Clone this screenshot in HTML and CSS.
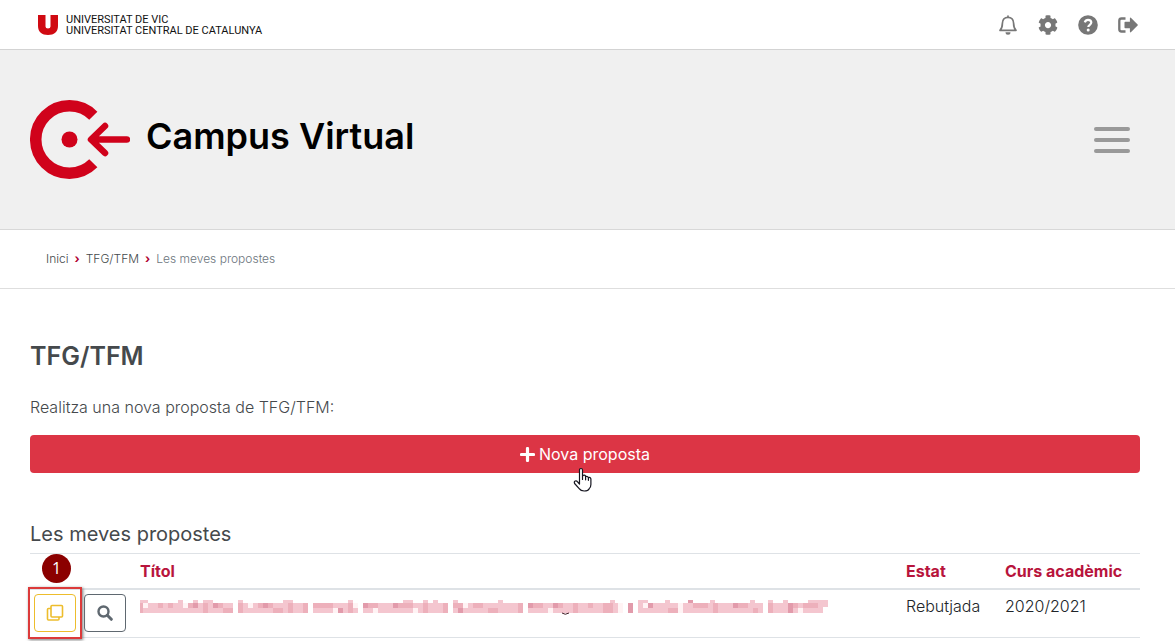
FILE: index.html
```html
<!DOCTYPE html>
<html lang="ca">
<head>
<meta charset="utf-8">
<meta name="viewport" content="width=device-width, initial-scale=1">
<title>Campus Virtual - Les meves propostes</title>
<link rel="stylesheet" href="styles.css">
</head>
<body>
<header class="topbar">
  <a class="university" href="#">
    <svg width="20" height="20" viewBox="0 0 20 20" aria-hidden="true"><path fill="#d00a12" d="M0 0h7.500v11.500q0 2 2.500 2t2.500-2V0H20v11c0 6-4 9-10 9S0 17 0 11z"/></svg>
    <span class="university-name">UNIVERSITAT DE VIC<br>UNIVERSITAT CENTRAL DE CATALUNYA</span>
  </a>
  <nav class="tools" aria-label="Eines">
    <button class="tool" type="button" aria-label="Notificacions"><svg width="20" height="20" viewBox="0 0 20 20"><path d="M10 2.200v-1.200M2 15.300h16c-2-2-2.400-3-2.400-7 0-3.600-2.300-6-5.600-6s-5.600 2.400-5.600 6c0 4-.4 5-2.400 7z" fill="none" stroke="#777" stroke-width="1.700" stroke-linejoin="round" stroke-linecap="round"/><path d="M7.500 17.300h5a2.500 2.500 0 0 1-5 0z" fill="#777"/></svg></button>
    <button class="tool" type="button" aria-label="Configuració"><svg width="20" height="20" viewBox="0 0 512 512"><path fill="#777" d="M487.400 315.700l-42.600-24.600c4.300-23.200 4.300-47 0-70.200l42.600-24.600c4.900-2.800 7.100-8.600 5.500-14-11.100-35.600-30-67.800-54.700-94.600-3.800-4.100-10-5.100-14.800-2.300L380.800 110c-17.900-15.400-38.500-27.300-60.800-35.100V25.800c0-5.600-3.900-10.500-9.400-11.700-36.700-8.200-74.300-7.800-109.200 0-5.500 1.200-9.400 6.100-9.400 11.700V75c-22.200 7.900-42.800 19.800-60.800 35.100L88.700 85.500c-4.900-2.800-11-1.900-14.800 2.300-24.700 26.700-43.600 58.900-54.700 94.600-1.700 5.400.6 11.200 5.500 14L67.300 221c-4.300 23.200-4.300 47 0 70.200l-42.600 24.600c-4.900 2.800-7.100 8.600-5.500 14 11.100 35.600 30 67.800 54.700 94.600 3.800 4.100 10 5.100 14.800 2.300l42.600-24.600c17.900 15.400 38.500 27.300 60.800 35.100v49.200c0 5.600 3.900 10.500 9.400 11.700 36.700 8.200 74.300 7.800 109.200 0 5.500-1.200 9.400-6.100 9.400-11.700v-49.200c22.200-7.900 42.800-19.800 60.800-35.100l42.600 24.600c4.900 2.800 11 1.900 14.800-2.300 24.700-26.700 43.600-58.900 54.700-94.600 1.500-5.500-.7-11.300-5.600-14.100zM256 336c-44.100 0-80-35.900-80-80s35.900-80 80-80 80 35.900 80 80-35.900 80-80 80z"/></svg></button>
    <button class="tool" type="button" aria-label="Ajuda"><svg width="20" height="20" viewBox="0 0 20 20"><circle cx="10" cy="10" r="9.800" fill="#777"/><path d="M6.800 7.300C7.400 5.600 8.500 4.900 10 4.900c1.900 0 3.300 1.100 3.300 2.700 0 2.200-3 2.300-3 4.500" fill="none" stroke="#fff" stroke-width="2.200"/><circle cx="10.200" cy="14.900" r="1.500" fill="#fff"/></svg></button>
    <button class="tool" type="button" aria-label="Surt"><svg width="20" height="20" viewBox="0 0 20 20"><path d="M7.500 3.500h-4q-2.200 0-2.200 2.200v8.600q0 2.200 2.200 2.200h4" fill="none" stroke="#777" stroke-width="2.300"/><path fill="#777" d="M6.500 7.500q0-.8.800-.8h4.600V3.500q0-1.400 1.200-.6l6.500 6.500q.6.600 0 1.200l-6.500 6.500q-1.200.8-1.200-.6v-3.200H7.300q-.8 0-.8-.8z"/></svg></button>
  </nav>
</header>
<div class="hero">
  <a class="brand" href="#">
    <svg width="100" height="80" viewBox="0 0 100 80" aria-hidden="true">
      <path d="M63.300 15.700A33.700 33.700 0 1 0 63.300 63.300" fill="none" stroke="#d0021b" stroke-width="11.500"/>
      <circle cx="39.500" cy="39.500" r="8" fill="#d0021b"/>
      <path d="M75 26 61 39.500 75 53M62 39.500h35" fill="none" stroke="#d0021b" stroke-width="6.500" stroke-linecap="round" stroke-linejoin="round"/>
    </svg>
    <span class="brand-name">Campus Virtual</span>
  </a>
  <button class="menu" type="button" aria-label="Menú"><span class="menu-bar"></span><span class="menu-bar"></span><span class="menu-bar"></span></button>
</div>
<nav class="breadcrumb" aria-label="Ruta">
  <a href="#">Inici</a>
  <span class="separator">›</span>
  <a href="#">TFG/TFM</a>
  <span class="separator">›</span>
  <span class="current">Les meves propostes</span>
</nav>
<main class="content">
  <h1>TFG/TFM</h1>
  <p class="intro">Realitza una nova proposta de TFG/TFM:</p>
  <div class="create">
    <button class="new-proposal" type="button"><svg width="15" height="15" viewBox="0 0 15 15" aria-hidden="true"><path d="M7.500 1.500v12M1.500 7.500h12" stroke="#fff" stroke-width="3.200" stroke-linecap="round"/></svg>Nova proposta</button>
    <svg class="pointer" width="20" height="26" viewBox="0 0 20 26" aria-hidden="true"><path d="M6.500 14.500V3.300q0-1.800 1.500-1.800t1.500 1.800v6q.5-1.300 1.800-1.100 1.200.2 1.300 1.400 1.900-.9 2.800 1 2-.6 2.500 1.300v5.600q0 2.500-1.700 4.200-1 2.300-5 2.300-3.500 0-5-2.300L1.600 16.500q-.8-1.900.6-2.500 1.500-.4 2.500 1l1.800 2zM9.500 9v3.500M12.600 9.600v3.200M15.400 10.800v2.500" fill="#fff" stroke="#161620" stroke-width="1.200" stroke-linejoin="round" stroke-linecap="round"/></svg>
  </div>
  <h2>Les meves propostes</h2>
  <table class="proposals">
    <thead>
      <tr><th class="actions-col" aria-label="Accions"></th><th scope="col">Títol</th><th class="status-col" scope="col">Estat</th><th class="year-col" scope="col">Curs acadèmic</th></tr>
    </thead>
    <tbody>
      <tr>
        <td class="actions-cell">
          <div class="actions">
            <span class="callout">
              <button class="action copy" type="button" aria-label="Duplica"><svg width="18" height="18" viewBox="0 0 18 18"><path d="M6 1.500h9.500q1 0 1 1V12q0 1-1 1H6q-1 0-1-1V2.500q0-1 1-1zM5 4.500H2.500q-1 0-1 1V15q0 1 1 1H12q1 0 1-1v-2" fill="none" stroke="currentColor" stroke-width="1.600"/></svg></button>
              <span class="callout-number">1</span>
            </span>
            <button class="action search" type="button" aria-label="Consulta"><svg width="16" height="16" viewBox="0 0 16 16"><circle cx="6.500" cy="6.500" r="5" fill="none" stroke="currentColor" stroke-width="2.400"/><path d="M10.300 10.300 14.300 14.300" stroke="currentColor" stroke-width="3" stroke-linecap="round"/></svg></button>
          </div>
        </td>
        <td>
          <svg class="redacted" width="688" height="16" viewBox="0 0 688 16" role="img" aria-label="Títol ocult">
            <g shape-rendering="crispEdges">
              <path fill="#f4c6cf" d="M0 3h93v10H0zM98 3h70v10H98zM173 3h45v10h-45zM223 3h85v10h-85zM313 3h70v10h-70zM388 3h95v10h-95zM498 3h125v10H498zM628 3h55v10h-55zM0 0h8v3H0zM38 0h5v3h-5zM53 0h5v3h-5zM63 0h10v3H63zM98 0h5v3h-5zM143 0h10v3h-10zM208 0h5v3h-5zM263 0h10v3h-10zM283 0h5v3h-5zM293 0h5v3h-5zM313 0h5v3h-5zM358 0h5v3h-5zM470 0h5v3h-5zM498 0h10v3h-10zM525 0h5v3h-5zM570 0h5v3h-5zM610 0h5v3h-5zM628 0h5v3h-5zM643 0h5v3h-5zM668 0h20v7h-20z"/>
              <path fill="#edb0bb" d="M0 3h3v10H0zM18 3h5v5h-5zM28 3h5v5h-5zM48 3h10v5H48zM63 3h5v5h-5zM73 3h10v5H73zM63 8h5v5h-5zM83 8h10v5H83zM98 3h5v10h-5zM118 3h15v5h-15zM133 8h10v5h-10zM148 3h5v10h-5zM163 3h5v10h-5zM173 3h20v5h-20zM208 3h5v10h-5zM223 3h15v5h-15zM253 3h20v5h-20zM283 3h5v10h-5zM303 3h5v10h-5zM313 3h10v5h-10zM333 3h10v5h-10zM348 8h10v5h-10zM378 3h5v10h-5zM388 3h15v5h-15zM418 3h5v5h-5zM433 3h5v10h-5zM448 3h5v5h-5zM463 3h10v10h-10zM508 3h5v5h-5zM528 8h10v5h-10zM553 3h15v5h-15zM573 3h5v10h-5zM593 3h15v5h-15zM613 8h5v5h-5zM628 3h5v10h-5zM648 3h10v5h-10zM663 3h15v5h-15z"/>
              <path fill="#e29bab" d="M53 3h5v5h-5zM73 3h5v5h-5zM123 3h5v5h-5zM198 8h5v5h-5zM223 3h5v5h-5zM253 3h5v5h-5zM318 8h5v5h-5zM388 3h5v5h-5zM413 3h5v5h-5zM488 3h5v10h-5zM508 3h5v5h-5zM548 0h5v3h-5zM593 3h5v5h-5zM648 3h5v10h-5z"/>
              <path fill="#fff3f4" d="M3 3h5v5H3zM43 3h5v5h-5zM108 3h5v5h-5zM193 8h5v5h-5zM213 3h5v5h-5zM233 8h5v5h-5zM273 8h5v5h-5zM323 3h5v5h-5zM408 8h5v5h-5zM478 3h5v10h-5zM503 3h5v5h-5zM538 3h5v10h-5zM658 8h5v5h-5z"/>
            </g>
            <path d="M422 13q3 2.500 7 0" fill="none" stroke="#42202a"/>
          </svg>
        </td>
        <td>Rebutjada</td>
        <td>2020/2021</td>
      </tr>
    </tbody>
  </table>
</main>
</body>
</html>
```
FILE: styles.css
```css
* { box-sizing: border-box; }

body {
  margin: 0;
  background: #fff;
  color: #45494c;
  font: 300 16px/24px Inter, Roboto, sans-serif;
}

a { color: inherit; text-decoration: none; }
button { font: inherit; cursor: pointer; }
svg { display: block; }

.topbar {
  display: flex;
  align-items: center;
  justify-content: space-between;
  min-height: 50px;
  padding: 0 37px 0 38px;
  border-bottom: 1px solid #d3d3d3;
}

.university { display: flex; align-items: center; gap: 8px; }
.university-name { color: #111; font: 400 11px/11px Roboto, sans-serif; }
.tools { display: flex; gap: 20px; }
.tool { padding: 0; border: 0; background: none; }

.hero {
  display: flex;
  align-items: center;
  justify-content: space-between;
  min-height: 180px;
  padding: 0 45px 0 30px;
  border-bottom: 1px solid #d8d8d8;
  background: #f0f0f0;
}

.brand { display: flex; align-items: center; gap: 16px; }
.brand-name { padding-bottom: 8px; color: #000; font-size: 36px; font-weight: 600; line-height: 44px; }

.menu {
  display: flex;
  flex-direction: column;
  gap: 7px;
  width: 36px;
  padding: 0;
  border: 0;
  background: none;
}
.menu-bar { height: 4px; border-radius: 2px; background: #999; }

.breadcrumb {
  display: flex;
  align-items: center;
  gap: 6px;
  min-height: 59px;
  padding: 0 46px;
  border-bottom: 1px solid #dedede;
  font-size: 12px;
  line-height: 18px;
}
.separator { color: #b00030; font-weight: 700; }
.current { color: #6c757d; }

.content { padding: 50px 35px 4px 30px; }
h1 { margin: 0; font-size: 25px; font-weight: 600; line-height: 34px; }
.intro { margin: 22px 0 16px; }
.create { position: relative; }

.new-proposal {
  display: flex;
  align-items: center;
  justify-content: center;
  gap: 4px;
  width: 100%;
  min-height: 38px;
  padding: 0 12px;
  border: 0;
  border-radius: 4px;
  background: #dc3545;
  color: #fff;
  font-weight: 400;
}
.pointer { position: absolute; top: 32px; left: calc(50% - 12px); }

h2 { margin: 49px 0 7px; font-size: 20px; font-weight: 400; line-height: 24px; }

.proposals { width: 100%; border-spacing: 0; border-top: 1px solid #dee2e6; }
th {
  padding: 5px 12px;
  border-bottom: 2px solid #dee2e6;
  color: #b8143c;
  font-weight: 700;
  text-align: left;
}
td {
  padding: 4px 12px;
  border-bottom: 1px solid #dee2e6;
  color: #212529;
  vertical-align: top;
}
.actions-col { width: 98px; }
.status-col { width: 99px; }
.year-col { width: 147px; }
.actions-cell { padding: 4px 2px 5px 4px; }
.actions { display: flex; gap: 8px; }

.action {
  display: flex;
  align-items: center;
  justify-content: center;
  width: 42px;
  height: 38px;
  padding: 0;
  border: 1px solid currentColor;
  border-radius: 4px;
  background: #fff;
}
.copy { color: #edbd2c; }
.search { color: #5f6870; }

.callout { position: relative; }
.callout::after {
  content: "";
  position: absolute;
  inset: -7px -6px;
  border: 2px solid #dc3a3a;
  box-shadow: 1px 1px 3px #777;
  pointer-events: none;
}
.callout-number {
  position: absolute;
  bottom: 49px;
  left: 8px;
  width: 29px;
  height: 29px;
  border-radius: 50%;
  background: #8b0000;
  color: #fff;
  font: 400 16px/29px "Open Sans", sans-serif;
  text-align: center;
}
.redacted { margin-top: 6px; }
```
